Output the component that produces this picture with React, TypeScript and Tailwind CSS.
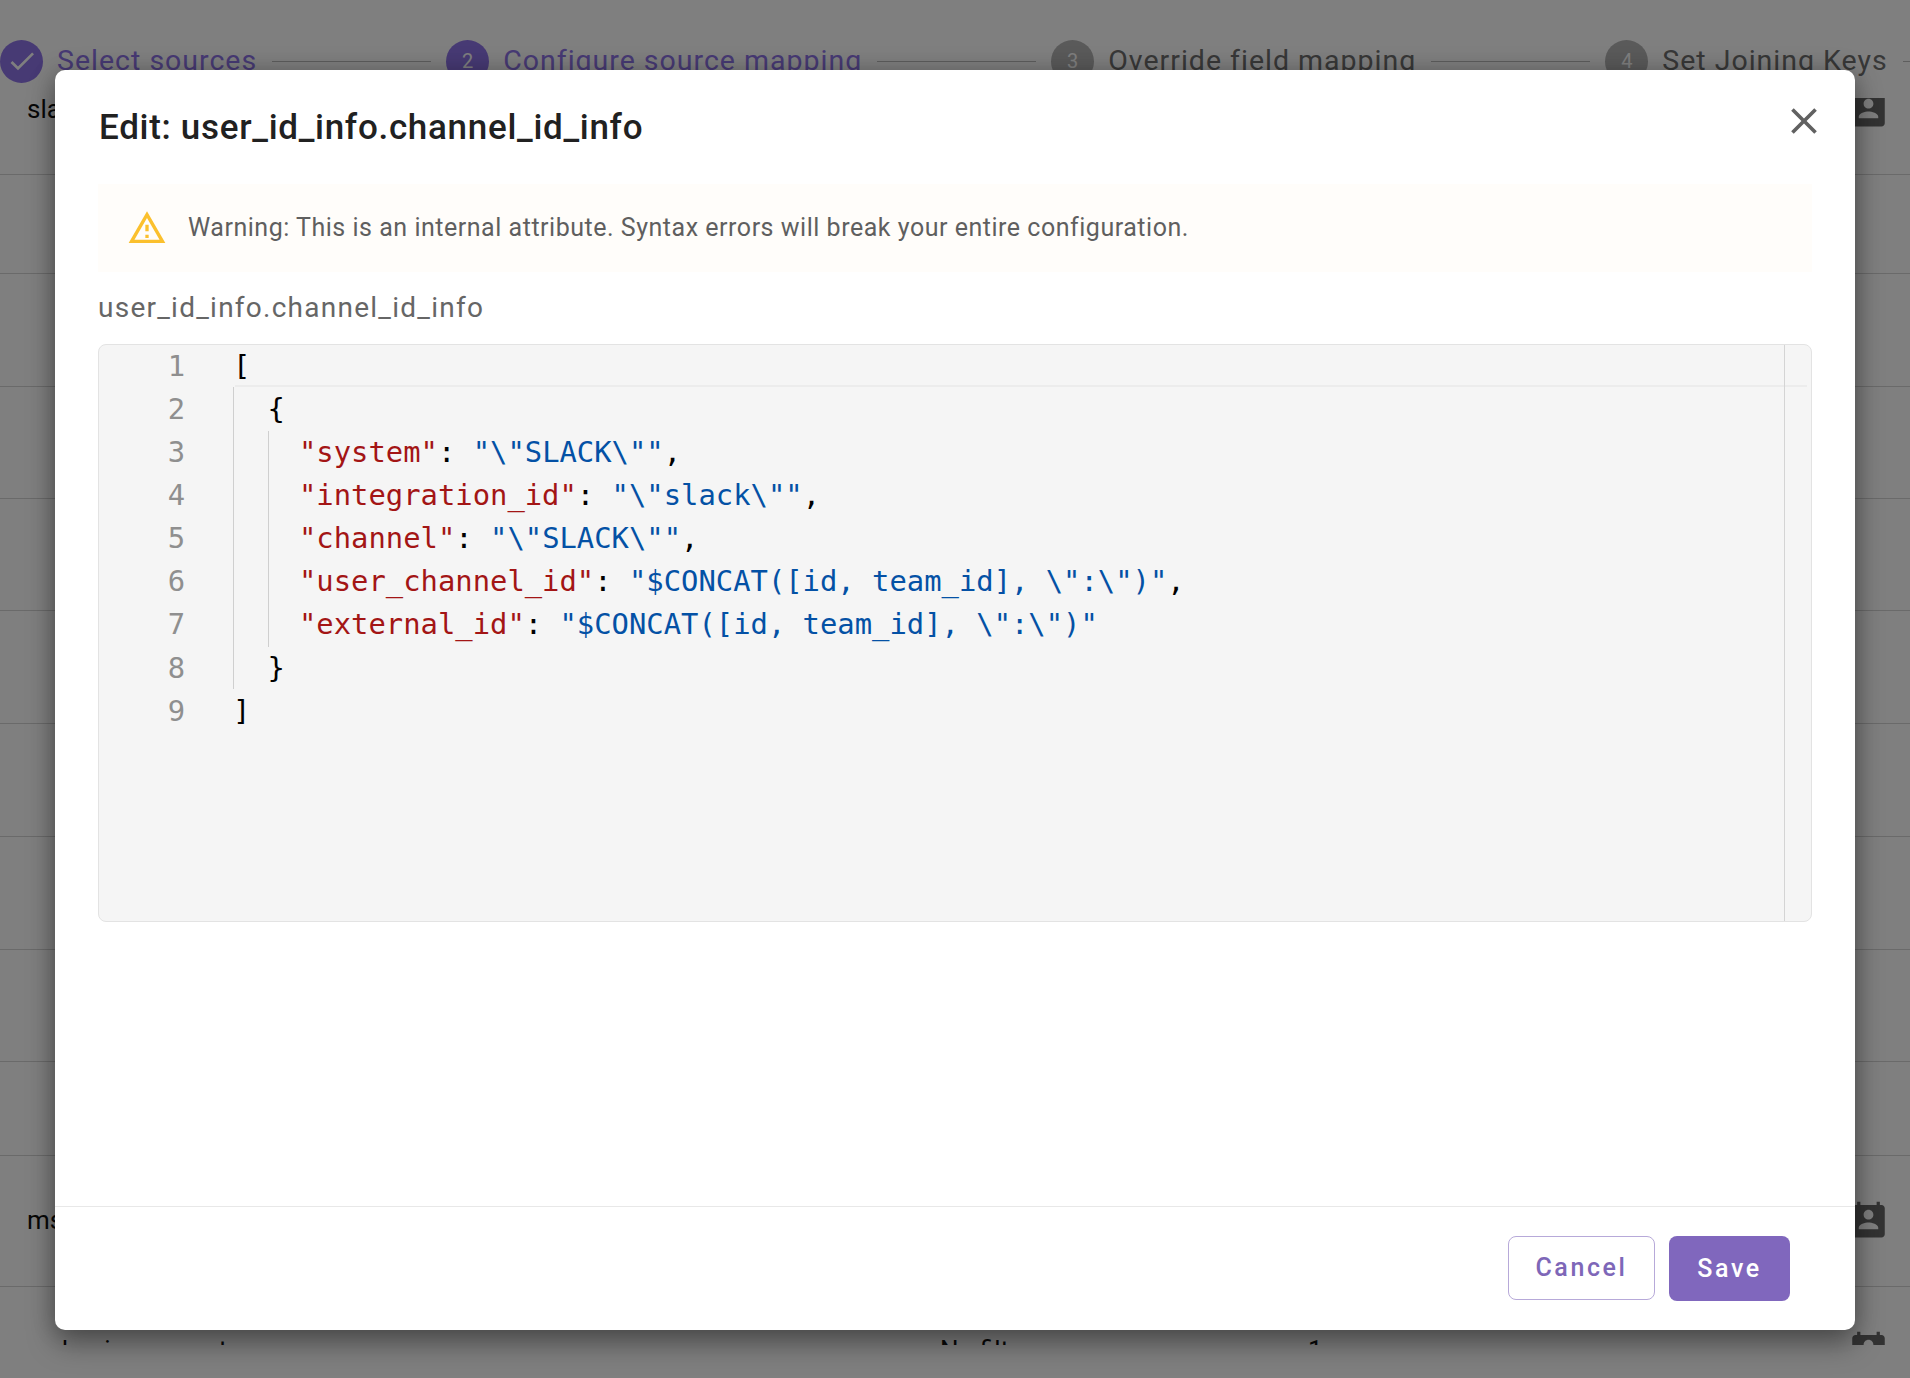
const rowLines = [174, 273, 386, 498, 610, 723, 836, 949, 1061, 1155, 1286];

function PersonCalendar() {
  return (
    <svg viewBox="0 0 24 24" className="w-[39px] h-[39px] fill-[#666666] shrink-0">
      <path d="M20 3h-1V1h-2v2H7V1H5v2H4c-1.1 0-2 .9-2 2v16c0 1.1.9 2 2 2h16c1.1 0 2-.9 2-2V5c0-1.1-.9-2-2-2zm-8 3c1.66 0 3 1.34 3 3s-1.34 3-3 3-3-1.34-3-3 1.34-3 3-3zm6 12H6v-1c0-2 4-3.1 6-3.1s6 1.1 6 3.1v1z" />
    </svg>
  );
}

function Step({ label, n, state }: { label: string; n?: number; state: 'done' | 'active' | 'idle' }) {
  const circle = state === 'idle' ? 'bg-[#b4b4b4]' : 'bg-[#8f74e8]';
  const text = state === 'idle' ? 'text-[#707070]' : 'text-[#8f74e8]';
  return (
    <div className="flex items-center gap-[14px] shrink-0">
      <div className={`w-[43px] h-[43px] rounded-full flex items-center justify-center text-white text-[20px] ${circle}`}>
        {state === 'done' ? (
          <svg viewBox="0 0 24 24" className="w-[32px] h-[32px] fill-white">
            <path d="M9 16.17 4.83 12l-1.42 1.41L9 19 21 7l-1.41-1.41z" />
          </svg>
        ) : (
          n
        )}
      </div>
      <span className={`mt-px text-[28.5px] leading-none tracking-[1px] whitespace-nowrap ${text}`}>{label}</span>
    </div>
  );
}

// editor row; pad is the left offset of the code inside the row
function Line({ n, pad = 0, children }: { n: number; pad?: number; children: React.ReactNode }) {
  return (
    <div className="flex h-[43.1px] items-center">
      <div className="w-[86px] text-right text-[#8f8f8f] shrink-0">{n}</div>
      <div className="ml-[48px] whitespace-pre" style={{ paddingLeft: pad }}>
        {children}
      </div>
    </div>
  );
}

const K = ({ children }: { children: React.ReactNode }) => <span className="text-[#a31515]">{children}</span>;
const V = ({ children }: { children: React.ReactNode }) => <span className="text-[#0451a5]">{children}</span>;

export default function App() {
  return (
    <div className="relative w-[1910px] h-[1378px] bg-white overflow-hidden font-['Roboto',sans-serif]">
      {/* page behind the dialog */}
      <div className="relative h-[1345px] overflow-hidden">
        <div className="h-[98px] flex items-center gap-[15px] pt-[24px]">
          <Step label="Select sources" state="done" />
          <div className="h-px w-[159px] shrink-0 bg-[#bdbdbd]" />
          <Step label="Configure source mapping" n={2} state="active" />
          <div className="h-px w-[159px] shrink-0 bg-[#bdbdbd]" />
          <Step label="Override field mapping" n={3} state="idle" />
          <div className="h-px w-[159px] shrink-0 bg-[#bdbdbd]" />
          <Step label="Set Joining Keys" n={4} state="idle" />
          <div className="h-px w-[20px] shrink-0 bg-[#bdbdbd]" />
        </div>
        {rowLines.map((y) => (
          <div key={y} className="absolute left-0 right-0 h-px bg-[#d4d4d4]" style={{ top: y }} />
        ))}
        <span className="absolute left-[27px] top-[90px] text-[26px] text-[#111111]">slack</span>
        <span className="absolute left-[27px] top-[1201px] text-[26px] text-[#111111]">msteams</span>
        <span className="absolute left-[62px] top-[1331px] text-[26px] text-[#111111]">business_acct</span>
        <span className="absolute left-[940px] top-[1331px] text-[26px] text-[#111111]">No filter</span>
        <span className="absolute left-[1308px] top-[1331px] text-[26px] text-[#111111]">1</span>
        <div className="absolute left-[1849px] top-[98px] h-[30px] w-[39px] overflow-hidden">
          <div className="-mt-[9px]"><PersonCalendar /></div>
        </div>
        <div className="absolute left-[1849px] top-[1200px]"><PersonCalendar /></div>
        <div className="absolute left-[1849px] top-[1330px]"><PersonCalendar /></div>
      </div>
      <div className="absolute inset-0 bg-black/50" />

      {/* dialog */}
      <div className="absolute left-[55px] top-[70px] w-[1800px] h-[1260px] bg-white rounded-[10px] flex flex-col shadow-[0_14px_28px_rgba(0,0,0,0.35),0_0_24px_rgba(0,0,0,0.2)]">
        <div className="relative px-[44px] pt-[35px] h-[114px] shrink-0">
          <h2 className="text-[35px] leading-[46px] font-medium tracking-[0.7px] text-[#212121]">Edit: user_id_info.channel_id_info</h2>
          <button className="absolute left-[1727px] top-[29px] text-[#616161]">
            <svg viewBox="0 0 24 24" className="w-[44px] h-[44px] fill-current">
              <path d="M19 6.41 17.59 5 12 10.59 6.41 5 5 6.41 10.59 12 5 17.59 6.41 19 12 13.41 17.59 19 19 17.59 13.41 12z" />
            </svg>
          </button>
        </div>
        <div className="mx-[43px] h-[88px] shrink-0 bg-[#fffdfa] flex items-center pl-[29px]">
          <svg viewBox="0 0 24 24" className="w-[40px] h-[40px] fill-[#fbc02d] shrink-0">
            <path d="M12 5.99 19.53 19H4.47L12 5.99M12 2 1 21h22L12 2zm1 14h-2v2h2v-2zm0-6h-2v4h2v-4z" />
          </svg>
          <span className="ml-[21px] text-[25px] tracking-[0.52px] text-[#5f5f5f]">
            Warning: This is an internal attribute. Syntax errors will break your entire configuration.
          </span>
        </div>
        <div className="mx-[43px] mt-[19px] text-[28px] leading-[34px] tracking-[1.25px] text-[#666666]">user_id_info.channel_id_info</div>
        <div className="relative mx-[43px] mt-[19px] h-[578px] border border-[#e3e3e3] rounded-[8px] bg-[#f5f5f5] overflow-hidden font-['DejaVu_Sans_Mono',monospace] text-[28.85px] text-black">
          <div className="absolute left-[136px] right-[4px] top-0 h-[42px] border-b-2 border-[#ececec]" />
          <div className="absolute left-[1685px] top-0 bottom-0 w-px bg-[#d4d4d4]" />
          <div className="absolute left-[134px] top-[42px] h-[302px] w-px bg-[#cfcfcf]" />
          <div className="absolute left-[169px] top-[86px] h-[216px] w-px bg-[#cfcfcf]" />
          <div className="relative">
            <Line n={1}>[</Line>
            <Line n={2} pad={34.5}>{'{'}</Line>
            <Line n={3} pad={66}><K>"system"</K>: <V>"\"SLACK\""</V>,</Line>
            <Line n={4} pad={66}><K>"integration_id"</K>: <V>"\"slack\""</V>,</Line>
            <Line n={5} pad={66}><K>"channel"</K>: <V>"\"SLACK\""</V>,</Line>
            <Line n={6} pad={66}><K>"user_channel_id"</K>: <V>"$CONCAT([id, team_id], \":\")"</V>,</Line>
            <Line n={7} pad={66}><K>"external_id"</K>: <V>"$CONCAT([id, team_id], \":\")"</V></Line>
            <Line n={8} pad={34.5}>{'}'}</Line>
            <Line n={9}>]</Line>
          </div>
        </div>
        <div className="mt-auto h-[124px] border-t border-[#e8e8e8] flex justify-end items-start pt-[29px] pr-[65px] gap-[14px] shrink-0">
          <button className="w-[147px] h-[64px] rounded-[8px] border border-[#b7a9d9] text-[#7e67b8] text-[25px] font-medium tracking-[2.6px]">Cancel</button>
          <button className="w-[121px] h-[65px] rounded-[8px] bg-[#8067bd] text-white text-[25px] font-medium tracking-[2.6px]">Save</button>
        </div>
      </div>
    </div>
  );
}
